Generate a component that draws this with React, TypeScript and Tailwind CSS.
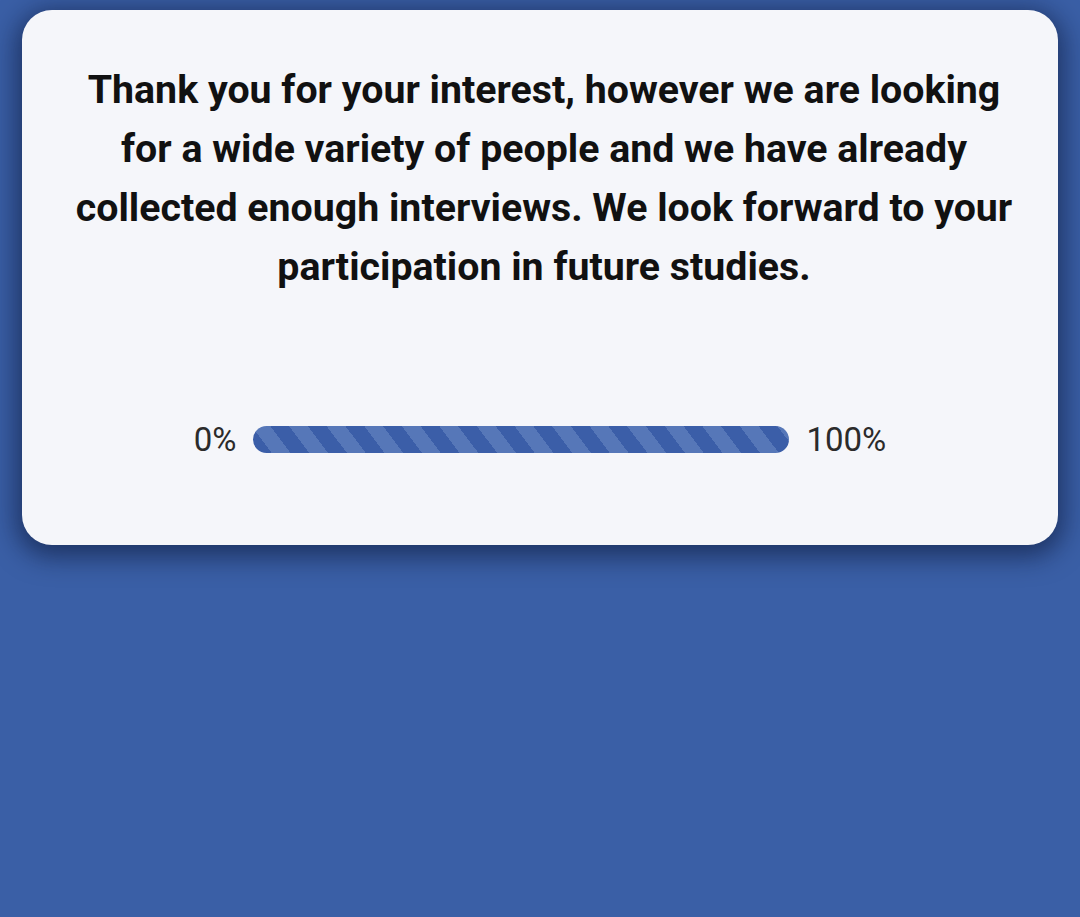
import React from "react";

const App = () => {
  return (
    <div className="min-h-[917px] w-full bg-[#3a5fa6] px-[22px] pt-[10px] font-['Roboto',sans-serif]">
      {/* Message card */}
      <div className="rounded-[30px] bg-[#f5f6fa] pb-[89px] pt-[51px] shadow-[0_6px_26px_6px_rgba(12,24,56,0.6)]">
        <p className="ml-[49px] w-[946px] text-center text-[39.3px] font-bold leading-[59px] text-[#111111]">
          Thank you for your interest, however we are looking for a wide variety of people and we have already
          collected enough interviews. We look forward to your participation in future studies.
        </p>

        {/* Progress */}
        <div className="mt-[126px] flex items-center justify-center gap-[17px]">
          <span className="text-[33px] leading-none text-[#2b2b2b]">0%</span>
          <div className="h-[27px] w-[536px] rounded-full bg-[repeating-linear-gradient(53deg,#3b5ea8_0px,#3b5ea8_15px,#5677b8_15px,#5677b8_30px)]" />
          <span className="text-[33px] leading-none text-[#2b2b2b]">100%</span>
        </div>
      </div>
    </div>
  );
};

export default App;
